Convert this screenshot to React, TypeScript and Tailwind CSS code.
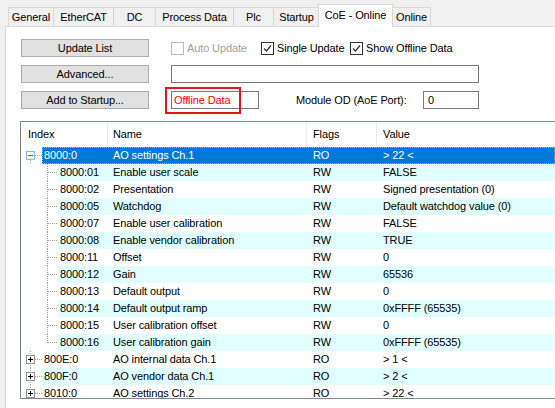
import React from 'react'

type Row = {
  idx: string
  name: string
  flags: string
  value: string
  level: 0 | 1
  expanded?: boolean
  selected?: boolean
  lastChild?: boolean
}

const rows: Row[] = [
  { idx: '8000:0', name: 'AO settings Ch.1', flags: 'RO', value: '> 22 <', level: 0, expanded: true, selected: true },
  { idx: '8000:01', name: 'Enable user scale', flags: 'RW', value: 'FALSE', level: 1 },
  { idx: '8000:02', name: 'Presentation', flags: 'RW', value: 'Signed presentation (0)', level: 1 },
  { idx: '8000:05', name: 'Watchdog', flags: 'RW', value: 'Default watchdog value (0)', level: 1 },
  { idx: '8000:07', name: 'Enable user calibration', flags: 'RW', value: 'FALSE', level: 1 },
  { idx: '8000:08', name: 'Enable vendor calibration', flags: 'RW', value: 'TRUE', level: 1 },
  { idx: '8000:11', name: 'Offset', flags: 'RW', value: '0', level: 1 },
  { idx: '8000:12', name: 'Gain', flags: 'RW', value: '65536', level: 1 },
  { idx: '8000:13', name: 'Default output', flags: 'RW', value: '0', level: 1 },
  { idx: '8000:14', name: 'Default output ramp', flags: 'RW', value: '0xFFFF (65535)', level: 1 },
  { idx: '8000:15', name: 'User calibration offset', flags: 'RW', value: '0', level: 1 },
  { idx: '8000:16', name: 'User calibration gain', flags: 'RW', value: '0xFFFF (65535)', level: 1, lastChild: true },
  { idx: '800E:0', name: 'AO internal data Ch.1', flags: 'RO', value: '> 1 <', level: 0 },
  { idx: '800F:0', name: 'AO vendor data Ch.1', flags: 'RO', value: '> 2 <', level: 0 },
  { idx: '8010:0', name: 'AO settings Ch.2', flags: 'RO', value: '> 22 <', level: 0 },
]

const tabs = [
  { label: 'General', cls: 'w-[46px]' },
  { label: 'EtherCAT', cls: 'w-[61px] -ml-px' },
  { label: 'DC', cls: 'w-[43px] -ml-px' },
  { label: 'Process Data', cls: 'w-[79px] -ml-px' },
  { label: 'Plc', cls: 'w-[41px] -ml-px' },
  { label: 'Startup', cls: 'w-[47px] -ml-px' },
  { label: 'CoE - Online', cls: 'w-[75px] -ml-[2px]', active: true },
  { label: 'Online', cls: 'w-[39px] -ml-px' },
]

function TreeGutter({ row, first }: { row: Row; first: boolean }) {
  const dot = '#a0a0a0'
  if (row.level === 0) {
    const boxColor = row.selected ? '#0078d7' : '#919191'
    return (
      <svg width={21} height={17} className="shrink-0">
        <line x1={9.5} y1={first ? 13 : 0} x2={9.5} y2={17} stroke={dot} strokeDasharray="1 1" />
        <line x1={14} y1={8.5} x2={21} y2={8.5} stroke={dot} strokeDasharray="1 1" />
        <rect
          x={5.5}
          y={4.5}
          width={8}
          height={8}
          fill="white"
          stroke={boxColor}
          strokeDasharray={row.selected ? '1 1' : undefined}
        />
        <line x1={7} y1={8.5} x2={12} y2={8.5} stroke={row.selected ? '#0078d7' : '#000'} />
        {!row.expanded && <line x1={9.5} y1={6} x2={9.5} y2={11} stroke="#000" />}
      </svg>
    )
  }
  return (
    <svg width={37} height={17} className="shrink-0">
      <line x1={26.5} y1={0} x2={26.5} y2={row.lastChild ? 9 : 17} stroke={dot} strokeDasharray="1 1" />
      <line x1={27} y1={8.5} x2={37} y2={8.5} stroke={dot} strokeDasharray="1 1" />
    </svg>
  )
}

function Checkbox({ checked, disabled }: { checked?: boolean; disabled?: boolean }) {
  return (
    <div
      className={`flex h-[13px] w-[13px] shrink-0 items-center justify-center border bg-white ${
        disabled ? 'border-[#bcbcbc]' : 'border-[#333333]'
      }`}>
      {checked && (
        <svg width="9" height="9" viewBox="0 0 9 9">
          <path d="M1 4.5 L3.5 7 L8 1.5" fill="none" stroke="#333" strokeWidth="1.2" />
        </svg>
      )}
    </div>
  )
}

function Button({ children }: { children: React.ReactNode }) {
  return (
    <div className="flex h-[18px] w-[128px] shrink-0 items-center justify-center border border-[#adadad] bg-[#e1e1e1]">
      {children}
    </div>
  )
}

export default function App() {
  return (
    <div className="flex h-[408px] w-[555px] flex-col overflow-hidden bg-[#f0f0f0] font-['Liberation_Sans',Arial,sans-serif] text-[11px] leading-none tracking-[-0.12px] text-black">
      {/* tabs */}
      <div className="flex h-[26px] shrink-0 items-end pl-[8px]">
        {tabs.map((t) =>
          t.active ? (
            <div
              key={t.label}
              className={`relative z-10 -mb-px flex h-[23px] items-center justify-center border border-b-0 border-[#d9d9d9] bg-white pb-[2px] ${t.cls}`}>
              {t.label}
            </div>
          ) : (
            <div
              key={t.label}
              className={`flex h-[19px] items-center justify-center border border-b-0 border-[#d9d9d9] bg-[#f0f0f0] pt-px ${t.cls}`}>
              {t.label}
            </div>
          ),
        )}
      </div>

      {/* panel */}
      <div className="ml-[5px] flex flex-1 flex-col border-l border-t border-[#d9d9d9] bg-white pl-[15px] pt-[12px]">
        <div className="flex h-[18px] items-center">
          <Button>Update List</Button>
          <div className="ml-[22px] flex w-[90px] items-center gap-[3px] text-[#a0a0a0]">
            <Checkbox disabled />
            <span>Auto Update</span>
          </div>
          <div className="flex w-[89px] items-center gap-[3px]">
            <Checkbox checked />
            <span>Single Update</span>
          </div>
          <div className="flex items-center gap-[3px]">
            <Checkbox checked />
            <span>Show Offline Data</span>
          </div>
        </div>

        <div className="mt-[8px] flex h-[18px] items-center">
          <Button>Advanced...</Button>
          <div className="ml-[22px] h-[18px] w-[308px] border border-[#7a7a7a] bg-white"></div>
        </div>

        <div className="mt-[8px] flex h-[18px] items-center">
          <Button>Add to Startup...</Button>
          <div className="relative ml-[22px] flex h-[18px] w-[88px] items-center border border-[#7a7a7a] bg-white pl-[2px] text-[#ff0000]">
            Offline Data
            <div className="absolute -left-[7px] -top-[5px] h-[27px] w-[76px] border-2 border-[#e8141c]"></div>
          </div>
          <span className="ml-[37px]">Module OD (AoE Port):</span>
          <div className="ml-auto mr-[76px] flex h-[18px] w-[56px] items-center border border-[#7a7a7a] bg-white pl-[4px]">
            0
          </div>
        </div>

        {/* list */}
        <div className="ml-[-1px] mt-[12px] flex h-[278px] flex-col overflow-hidden border-b border-l border-t border-[#828790]">
          <div className="flex h-[25px] shrink-0">
            <div className="flex w-[87px] items-center border-r border-[#ececec] pl-[7px]">Index</div>
            <div className="flex w-[199px] items-center border-r border-[#ececec] pl-[5px]">Name</div>
            <div className="flex w-[70px] items-center border-r border-[#ececec] pl-[6px]">Flags</div>
            <div className="flex flex-1 items-center pl-[6px]">Value</div>
          </div>
          {rows.map((r, i) => {
            const bg = r.selected
              ? 'bg-[#0078d7] text-white outline outline-1 outline-dotted outline-[#f3a04a] -outline-offset-1'
              : i % 2 === 1
                ? 'bg-[#e1ffff]'
                : 'bg-white'
            return (
              <div key={r.idx} className="flex h-[17px] shrink-0">
                <TreeGutter row={r} first={i === 0} />
                <div className={`flex flex-1 items-center ${bg}`}>
                  <div className={`${r.level === 0 ? 'w-[65px]' : 'w-[49px]'} shrink-0 pl-[2px]`}>{r.idx}</div>
                  <div className="w-[199px] shrink-0 pl-[6px]">{r.name}</div>
                  <div className="w-[70px] shrink-0 pl-[7px]">{r.flags}</div>
                  <div className="flex-1 whitespace-nowrap pl-[7px]">{r.value}</div>
                </div>
              </div>
            )
          })}
        </div>
      </div>
    </div>
  )
}
